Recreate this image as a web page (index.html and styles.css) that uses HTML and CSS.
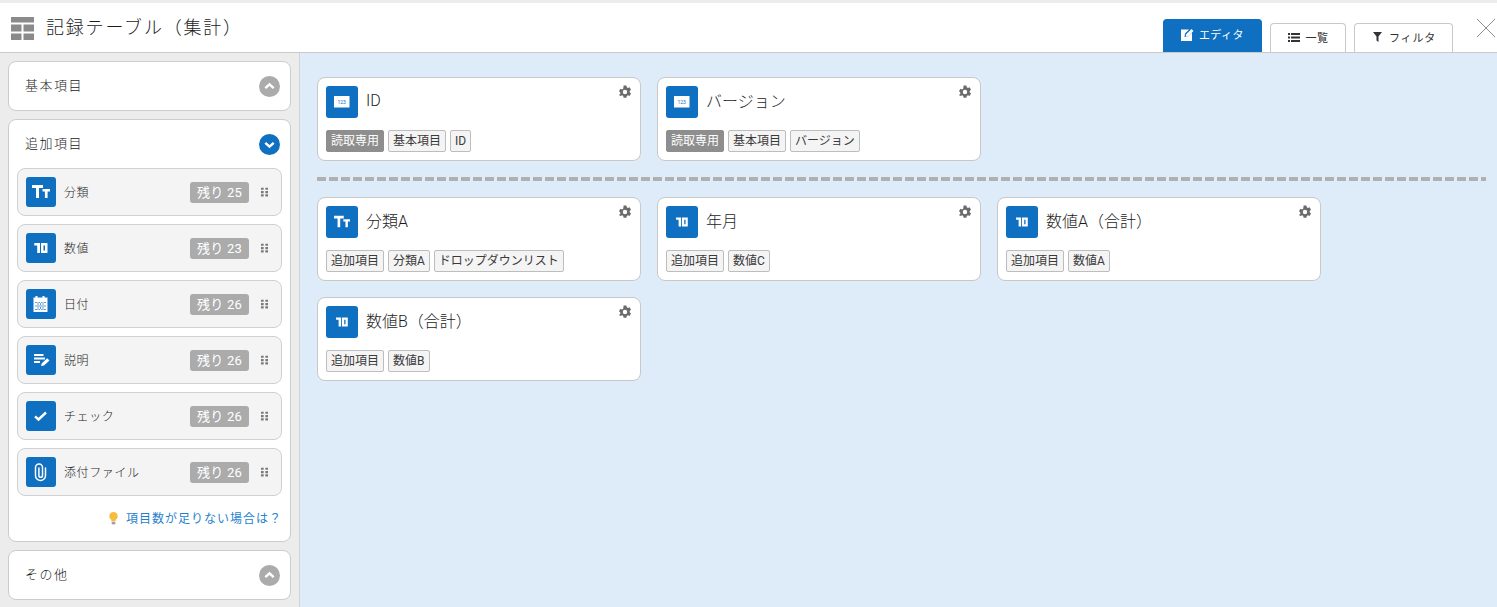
FILE: index.html
```html
<!DOCTYPE html>
<html lang="ja">
<head>
<meta charset="utf-8">
<title>記録テーブル（集計）</title>
<link rel="stylesheet" href="styles.css">
</head>
<body>
<svg class="defs" width="0" height="0">
  <defs>
    <symbol id="i-tt" viewBox="0 0 30 30"><path d="M6 8h11v3h-4v10h-3V11H6zM16.500 12H24v2.500h-2.400V21h-2.700v-6.500h-2.400z" fill="#fff"/></symbol>
    <symbol id="i-10" viewBox="0 0 30 30"><path d="M8.300 10H14v10h-2.800v-7.500H8.300zM15 10h6.500v10H15zM17.500 12.500v5H19v-5z" fill="#fff" fill-rule="evenodd"/></symbol>
    <symbol id="i-123" viewBox="0 0 32 32"><rect x="8" y="10" width="15.500" height="11.500" fill="#fff"/><text x="15.700" y="17.500" text-anchor="middle" class="i123">123</text></symbol>
    <symbol id="i-cal" viewBox="0 0 30 30"><path d="M9.500 7h2v1.500h5V7h2v1.500h3V23h-14V8.500h2z" fill="#fff"/><path d="M9 13h11v1H9zM9 16.500h11v1H9zM9 20h11v1H9zM11.500 13v8h1v-8zM14 13v8h1v-8zM16.500 13v8h1v-8z" fill="#5f9fd8"/></symbol>
    <symbol id="i-doc" viewBox="0 0 30 30"><path d="M8 9h9.500v2H8zM8 12.500h11v2H8zM8 16h6v2H8zM15 21l.8-2.800 5.400-5 2.300 2.300-5.500 5z" fill="#fff"/></symbol>
    <symbol id="i-check" viewBox="0 0 30 30"><path d="M9 15.300l3.500 3.200 7.500-7" fill="none" stroke="#fff" stroke-width="2.400"/></symbol>
    <symbol id="i-clip" viewBox="0 0 30 30"><path d="M19.500 11v7.500a5 5 0 0 1-10 0V10.500a3.500 3.500 0 0 1 7 0v8a1.800 1.800 0 0 1-3.600 0V11" fill="none" stroke="#fff" stroke-width="1.500" stroke-linecap="round"/></symbol>
    <symbol id="i-gear" viewBox="0 0 14 14"><path d="M5.600.5h2.800l.4 1.800 1.100.6 1.700-.6 1.400 2.400-1.300 1.300v1.200l1.300 1.200-1.400 2.500-1.700-.6-1.100.6-.4 1.800H5.600l-.4-1.800-1.100-.6-1.700.6L1 9.900l1.300-1.200V7.500L1 6.200l1.400-2.400 1.700.6 1.100-.6zM7 4.800a2.200 2.200 0 1 0 0 4.400 2.200 2.200 0 0 0 0-4.400z" fill="#6b6b6b" fill-rule="evenodd"/></symbol>
    <symbol id="i-grip" viewBox="0 0 8 10"><path d="M0 0h3v2.500H0zM5 0h3v2.500H5zM0 3.800h3v2.500H0zM5 3.800h3v2.500H5zM0 7.500h3V10H0zM5 7.500h3V10H5z" fill="#777"/></symbol>
    <symbol id="i-up" viewBox="0 0 20 20"><path d="M6 11.500l4-3.500 4 3.500" fill="none" stroke="#fff" stroke-width="2.400"/></symbol>
    <symbol id="i-down" viewBox="0 0 20 20"><path d="M6 8.500l4 3.500 4-3.500" fill="none" stroke="#fff" stroke-width="2.400"/></symbol>
  </defs>
</svg>
<div class="app">
  <header class="topbar">
    <svg class="table-icon" width="23" height="23" viewBox="0 0 23 23"><path d="M0 0h23v5.500H0zM0 7.500h10.500v7H0zM12.500 7.500H23v7H12.500zM0 16.500h10.500V23H0zM12.500 16.500H23V23H12.500z" fill="#8a8a8a"/></svg>
    <h1 class="title">記録テーブル（集計）</h1>
    <nav class="tabs">
      <a class="tab tab-active">
        <svg width="13" height="13" viewBox="0 0 13 13"><path d="M0 1.500h8L4 5.500 3.500 9 7 8.500l4-4V13H0z" fill="#fff"/><path d="M5 6.500L10.500 1 12.500 3 7 8.500 4.800 8.800z" fill="#fff"/></svg>
        <span>エディタ</span>
      </a>
      <a class="tab tab-list">
        <svg width="12" height="9" viewBox="0 0 12 9"><path d="M0 0h2v2H0zM3 0h9v2H3zM0 3.500h2v2H0zM3 3.500h9v2H3zM0 7h2v2H0zM3 7h9v2H3z" fill="#333"/></svg>
        <span>一覧</span>
      </a>
      <a class="tab tab-filter">
        <svg width="9" height="10" viewBox="0 0 9 10"><path d="M0 0h9L5.500 4.500V10L3.500 8.500v-4z" fill="#333"/></svg>
        <span>フィルタ</span>
      </a>
    </nav>
    <button class="close" aria-label="閉じる">
      <svg width="20" height="20" viewBox="0 0 20 20"><path d="M1 1l18 18M19 1L1 19" stroke="#8c8c8c" stroke-width="1" fill="none"/></svg>
    </button>
  </header>
  <div class="body">
    <aside class="sidebar">
      <section class="panel">
        <div class="panel-head"><span class="panel-title">基本項目</span><svg class="chev chev-gray"><use href="#i-up"/></svg></div>
      </section>
      <section class="panel panel-open">
        <div class="panel-head"><span class="panel-title">追加項目</span><svg class="chev chev-blue"><use href="#i-down"/></svg></div>
        <ul class="items">
          <li class="item"><svg class="item-icon"><use href="#i-tt"/></svg><span class="item-label">分類</span><span class="badge">残り 25</span><svg class="grip"><use href="#i-grip"/></svg></li>
          <li class="item"><svg class="item-icon"><use href="#i-10"/></svg><span class="item-label">数値</span><span class="badge">残り 23</span><svg class="grip"><use href="#i-grip"/></svg></li>
          <li class="item"><svg class="item-icon"><use href="#i-cal"/></svg><span class="item-label">日付</span><span class="badge">残り 26</span><svg class="grip"><use href="#i-grip"/></svg></li>
          <li class="item"><svg class="item-icon"><use href="#i-doc"/></svg><span class="item-label">説明</span><span class="badge">残り 26</span><svg class="grip"><use href="#i-grip"/></svg></li>
          <li class="item"><svg class="item-icon"><use href="#i-check"/></svg><span class="item-label">チェック</span><span class="badge">残り 26</span><svg class="grip"><use href="#i-grip"/></svg></li>
          <li class="item"><svg class="item-icon"><use href="#i-clip"/></svg><span class="item-label">添付ファイル</span><span class="badge">残り 26</span><svg class="grip"><use href="#i-grip"/></svg></li>
        </ul>
        <a class="help">
          <svg width="11" height="14" viewBox="0 0 12 14"><path d="M6 0.500a4.500 4.500 0 0 1 2.600 8.200L8.200 10.500H3.800L3.400 8.700A4.500 4.500 0 0 1 6 .5z" fill="#f5bd3c"/><path d="M4 11h4v2l-1 1H5l-1-1z" fill="#a79bb5"/></svg>
          <span>項目数が足りない場合は？</span>
        </a>
      </section>
      <section class="panel">
        <div class="panel-head"><span class="panel-title">その他</span><svg class="chev chev-gray"><use href="#i-up"/></svg></div>
      </section>
    </aside>
    <main class="canvas">
      <div class="row">
        <article class="card">
          <div class="card-head"><svg class="card-icon"><use href="#i-123"/></svg><span class="card-title">ID</span><svg class="gear"><use href="#i-gear"/></svg></div>
          <div class="tags"><span class="tag tag-ro">読取専用</span><span class="tag">基本項目</span><span class="tag">ID</span></div>
        </article>
        <article class="card">
          <div class="card-head"><svg class="card-icon"><use href="#i-123"/></svg><span class="card-title">バージョン</span><svg class="gear"><use href="#i-gear"/></svg></div>
          <div class="tags"><span class="tag tag-ro">読取専用</span><span class="tag">基本項目</span><span class="tag">バージョン</span></div>
        </article>
      </div>
      <div class="divider"></div>
      <div class="row">
        <article class="card">
          <div class="card-head"><svg class="card-icon" viewBox="-3 -3 36 36"><use href="#i-tt" width="30" height="30"/></svg><span class="card-title">分類A</span><svg class="gear"><use href="#i-gear"/></svg></div>
          <div class="tags"><span class="tag">追加項目</span><span class="tag">分類A</span><span class="tag">ドロップダウンリスト</span></div>
        </article>
        <article class="card">
          <div class="card-head"><svg class="card-icon" viewBox="-3 -3 36 36"><use href="#i-10" width="30" height="30"/></svg><span class="card-title">年月</span><svg class="gear"><use href="#i-gear"/></svg></div>
          <div class="tags"><span class="tag">追加項目</span><span class="tag">数値C</span></div>
        </article>
        <article class="card">
          <div class="card-head"><svg class="card-icon" viewBox="-3 -3 36 36"><use href="#i-10" width="30" height="30"/></svg><span class="card-title">数値A（合計）</span><svg class="gear"><use href="#i-gear"/></svg></div>
          <div class="tags"><span class="tag">追加項目</span><span class="tag">数値A</span></div>
        </article>
        <article class="card">
          <div class="card-head"><svg class="card-icon" viewBox="-3 -3 36 36"><use href="#i-10" width="30" height="30"/></svg><span class="card-title">数値B（合計）</span><svg class="gear"><use href="#i-gear"/></svg></div>
          <div class="tags"><span class="tag">追加項目</span><span class="tag">数値B</span></div>
        </article>
      </div>
    </main>
  </div>
</div>
</body>
</html>
```
FILE: styles.css
```css
* { box-sizing: border-box; }
html, body { margin: 0; height: 100%; overflow: hidden; }
body {
  font-family: Roboto, "Noto Sans CJK JP", sans-serif;
  font-weight: 300;
  color: #222;
  background: #ececec;
}
.defs { position: absolute; }
.i123 { font: 5px Roboto, sans-serif; fill: #0f6fc0; }
.app { display: flex; flex-direction: column; height: 607px; padding-top: 3px; }

.topbar {
  display: flex;
  align-items: flex-end;
  height: 50px;
  background: #fff;
  border-bottom: 1px solid #c9c9c9;
  flex: none;
}
.table-icon { align-self: flex-start; margin: 14px 0 0 11px; flex: none; }
.title {
  align-self: flex-start;
  margin: 10px 0 0 12px;
  font-size: 18px;
  line-height: 30px;
  font-weight: 300;
  letter-spacing: 1.800px;
  color: #1c1c1c;
}
.tabs { display: flex; align-items: flex-end; gap: 8px; margin-left: auto; height: 33px; }
.tab {
  display: flex;
  align-items: center;
  justify-content: center;
  gap: 6px;
  height: 29px;
  padding-bottom: 2px;
  background: #fff;
  border: 1px solid #c9c9c9;
  border-bottom: 0;
  border-radius: 4px 4px 0 0;
  font-size: 11px;
  font-weight: 400;
  letter-spacing: .5px;
  color: #333;
}
.tab-active { width: 99px; height: 33px; background: #0f6fc0; border-color: #0f6fc0; color: #fff; padding-bottom: 4px; gap: 5px; }
.tab-list { width: 76px; }
.tab-filter { width: 99px; gap: 7px; padding-left: 2px; letter-spacing: .8px; }
.close {
  align-self: flex-start;
  margin: 15px 1px 0 23px;
  padding: 0;
  width: 20px;
  height: 20px;
  border: 0;
  background: none;
  flex: none;
}

.body { display: flex; flex: 1; min-height: 0; }
.sidebar {
  width: 300px;
  flex: none;
  padding: 8px;
  display: flex;
  flex-direction: column;
  gap: 8px;
  background: #ececec;
  border-right: 1px solid #d4d4d4;
}
.panel {
  width: 283px;
  background: #fff;
  border: 1px solid #ccc;
  border-radius: 8px;
}
.panel-head {
  display: flex;
  align-items: center;
  justify-content: space-between;
  height: 48px;
  padding: 0 10px 0 16px;
}
.panel-title { font-size: 13px; letter-spacing: 1.500px; margin-top: -4px; color: #1c1c1c; }
.chev { width: 21px; height: 21px; border-radius: 50%; }
.chev-gray { background: #ababab; }
.chev-blue { background: #0f6fc0; }
.items {
  list-style: none;
  margin: 0;
  padding: 0 8px;
  display: flex;
  flex-direction: column;
  gap: 8px;
}
.item {
  display: flex;
  align-items: center;
  height: 48px;
  padding: 0 13px 0 8px;
  background: #f4f4f4;
  border: 1px solid #d0d0d0;
  border-radius: 8px;
}
.item-icon { width: 30px; height: 30px; flex: none; background: #0f6fc0; border-radius: 3px; }
.item-label { margin: -2px 0 0 8px; font-size: 12px; letter-spacing: .6px; flex: 1; color: #1c1c1c; }
.badge {
  width: 59px;
  height: 21px;
  line-height: 21px;
  text-align: center;
  background: #ababab;
  color: #fff;
  border-radius: 3px;
  font-size: 13px;
  font-weight: 400;
  letter-spacing: .2px;
}
.grip { width: 7px; height: 10px; margin-left: 12px; flex: none; }
.help {
  display: flex;
  align-items: center;
  justify-content: flex-end;
  gap: 7px;
  height: 45px;
  padding: 0 8px 2px 0;
  font-size: 12px;
  font-weight: 400;
  letter-spacing: 1px;
  color: #1f7fcf;
}

.canvas { flex: 1; background: #deebf8; padding: 24px 11px 0 17px; min-width: 0; }
.row { display: flex; flex-wrap: wrap; gap: 16px; }
.card {
  width: 324px;
  height: 84px;
  background: #fff;
  border: 1px solid #c8c8c8;
  border-radius: 8px;
  padding: 8px;
}
.card-head { display: flex; align-items: center; height: 32px; }
.card-icon { width: 32px; height: 32px; flex: none; background: #0f6fc0; border-radius: 3px; }
.card-title { margin: -4px 0 0 8px; font-size: 16px; color: #1c1c1c; flex: 1; }
.gear { width: 14px; height: 14px; flex: none; align-self: flex-start; margin: -1px 0 0 0; }
.tags { display: flex; gap: 4px; margin-top: 12px; }
.tag {
  height: 22px;
  line-height: 20px;
  padding: 0 4px;
  background: #f4f4f4;
  border: 1px solid #bdbdbd;
  border-radius: 2px;
  font-size: 12px;
  font-weight: 400;
  color: #3a3a3a;
  white-space: nowrap;
}
.tag-ro { background: #8e8e8e; border-color: #8e8e8e; color: #fff; }
.divider {
  height: 4px;
  margin: 16px 0;
  background: repeating-linear-gradient(90deg, #b0b0b0 0 9px, transparent 9px 12px);
}
```
